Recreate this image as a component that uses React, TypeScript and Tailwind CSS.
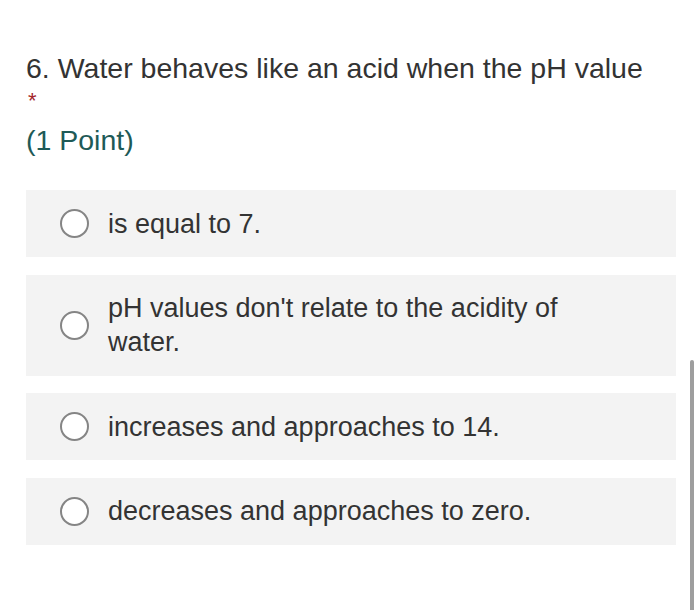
import { useState } from 'react';

const OPTIONS = [
  'is equal to 7.',
  "pH values don't relate to the acidity of water.",
  'increases and approaches to 14.',
  'decreases and approaches to zero.',
];

export default function App() {
  const [selected, setSelected] = useState<number | null>(null);

  return (
    <div
      className="relative h-[610px] w-[700px] overflow-hidden bg-white text-[#333333]"
      style={{ fontFamily: '"Liberation Sans", Arial, sans-serif' }}
    >
      <div className="pl-[26px] pr-[25px] pt-[51px]">
        <div className="text-[28.5px] leading-[34px]">6. Water behaves like an acid when the pH value</div>
        <div className="mt-[6px] h-[20px] pl-[2px] text-[22px] leading-[20px] text-[#a4262c]">*</div>
        <div className="mt-[12px] text-[28.5px] leading-[34px] text-[#1e5a57]">(1 Point)</div>

        <div className="mt-[33px] flex flex-col gap-[17.5px]">
          {OPTIONS.map((opt, i) => (
            <button
              key={i}
              type="button"
              onClick={() => setSelected(i)}
              className="flex min-h-[67px] w-[650px] items-center bg-[#f3f3f3] pl-[34px] pr-[60px] py-[16.5px] text-left"
            >
              <span className="flex h-[29px] w-[29px] shrink-0 items-center justify-center rounded-full border-2 border-[#858585] bg-white">
                {selected === i && <span className="h-[15px] w-[15px] rounded-full bg-[#333333]" />}
              </span>
              <span className="ml-[19px] text-[27px] leading-[34px] text-[#333333]">{opt}</span>
            </button>
          ))}
        </div>
      </div>

      {/* scroll indicator */}
      <div className="absolute right-[6px] top-[360px] h-[260px] w-[4px] rounded-full bg-[#9e9e9e]" />
    </div>
  );
}
